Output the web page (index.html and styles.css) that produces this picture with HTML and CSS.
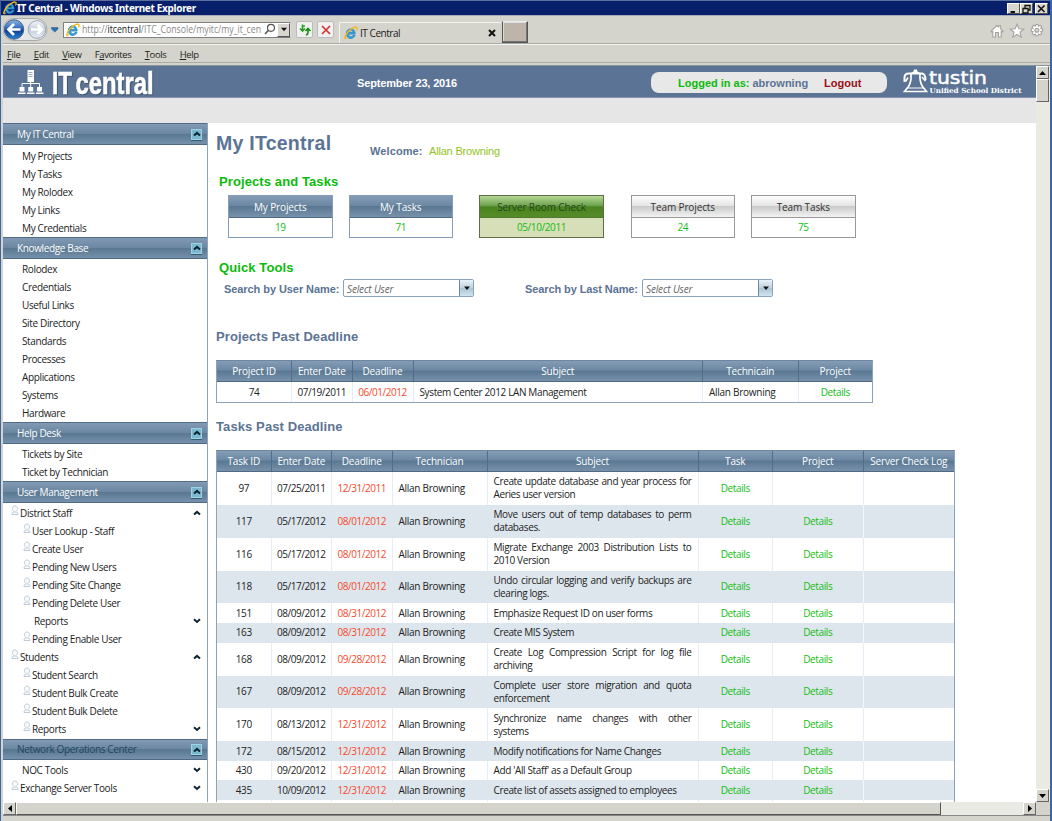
FILE: index.html
```html
<!DOCTYPE html>
<html lang="en">
<head>
<meta charset="utf-8">
<title>IT Central</title>
<link rel="stylesheet" href="styles.css">
</head>
<body>
<svg class="defs" width="0" height="0">
  <symbol id="ie" viewBox="0 0 16 16"><path d="M12.8 9.2H5.2c.2 3.4 4.2 3.8 5.200 1.500h2.300C10.700 16 2.400 15.300 2.600 8.500 2.700 1.600 13 1.200 12.800 9.200zM5.300 7.200h4.900c-.3-3-4.600-3-4.900 0z" fill="#3ba3df" stroke="#2583c0" stroke-width=".9"/><path d="M3 13.300C-.5 17 .5 11.500 4.500 6.800 8.500 2.200 14.500-.5 15 2.300c.2.900-.3 2-.8 2.800" fill="none" stroke="#f0b81c" stroke-width="1.500"/></symbol>
  <symbol id="user" viewBox="0 0 8 11"><path d="M2.500 6.200C.6 4 1.500 1 4 1s3.500 3 1.500 5.200M1 9.500c0-2 1-2.600 3-2.600s3 .6 3 2.600z" fill="#f7fafc" stroke="#bdcbd8" stroke-width="1"/></symbol>
  <symbol id="up" viewBox="0 0 8 6"><path d="M1 4.600 4 1.900 7 4.600" fill="none" stroke="#0d2532" stroke-width="2"/></symbol>
  <symbol id="down" viewBox="0 0 8 6"><path d="M1 1.200 4 3.900 7 1.200" fill="none" stroke="#0d2532" stroke-width="2"/></symbol>
</svg>
<div class="window">
  <div class="titlebar">
    <svg width="14" height="14"><use href="#ie"/></svg>
    <span class="title">IT Central - Windows Internet Explorer</span>
    <span class="winbtn first"><svg width="11" height="10"><path d="M2.500 8H7" stroke="#111" stroke-width="2"/></svg></span>
    <span class="winbtn"><svg width="11" height="10"><path d="M4 4V1.500h5V6H7M2 4.500h5V9H2z" fill="none" stroke="#111" stroke-width="1.300"/></svg></span>
    <span class="winbtn last"><svg width="11" height="10"><path d="M2 1.500 8.500 8M8.500 1.500 2 8" stroke="#111" stroke-width="1.600"/></svg></span>
  </div>
  <div class="toolbar">
    <svg class="nav" width="56" height="26" viewBox="0 0 56 26">
      <defs><linearGradient id="bk" x2="0" y2="1"><stop offset="0" stop-color="#8fb5e4"/><stop offset=".45" stop-color="#2e68b8"/><stop offset=".55" stop-color="#103f94"/><stop offset="1" stop-color="#2b83d2"/></linearGradient><linearGradient id="fw" x2="0" y2="1"><stop offset="0" stop-color="#f5f7fa"/><stop offset=".5" stop-color="#c3cddc"/><stop offset="1" stop-color="#e8eef5"/></linearGradient></defs>
      <rect x="0" y="1.500" width="44" height="22" rx="11" fill="#e6e7e7" stroke="#a9abab"/>
      <circle cx="11" cy="12.500" r="9.700" fill="url(#bk)" stroke="#3e5e8c"/><circle cx="34" cy="12.500" r="8.800" fill="url(#fw)" stroke="#9ba6b4"/>
      <path d="M17.500 12.500H6M11 7 5.500 12.500 11 18" fill="none" stroke="#fff" stroke-width="2.700"/>
      <path d="M28 12.500H39M34.500 8 39 12.500 34.500 17" fill="none" stroke="#fff" stroke-width="2.600"/>
      <path d="M48.500 10.500h6.500v1.500l-3.200 3-3.300-3z" fill="#2976b2" stroke="#1c4f7e" stroke-width=".5"/>
    </svg>
    <div class="address">
      <svg width="14" height="14"><use href="#ie"/></svg>
      <svg class="url" width="182" height="15"><text x="0" y="11" textLength="179" lengthAdjust="spacingAndGlyphs">http://<tspan class="host">itcentral</tspan>/ITC_Console/myitc/my_it_cen</text></svg>
      <svg width="12" height="13"><circle cx="7" cy="4.800" r="3.500" fill="none" stroke="#555" stroke-width="1.200"/><path d="M4.500 7.300 1 11" stroke="#555" stroke-width="1.600"/></svg>
      <span class="drop"><svg width="8" height="5"><path d="M1 .8h6l-3 3.400z" fill="#111"/></svg></span>
    </div>
    <span class="tbtn"><svg width="14" height="14"><path d="M4.500 1.500V8M2 5.500l2.500 2.500L7 5.500M7 3H4.500" fill="none" stroke="#269a26" stroke-width="1.600"/><path d="M10 5v4.500q0 2-2 2.500M7.500 8 10 5.500 12.500 8" fill="none" stroke="#188a18" stroke-width="1.600"/></svg></span>
    <span class="tbtn stop"><svg width="12" height="12"><path d="M2 2 10 10M10 2 2 10" stroke="#cf3434" stroke-width="1.700"/></svg></span>
    <div class="tab"><svg width="14" height="14"><use href="#ie"/></svg><span>IT Central</span><svg class="x" width="10" height="10"><path d="M2 2 8 8M8 2 2 8" stroke="#111" stroke-width="2"/></svg></div>
    <span class="newtab"></span>
    <svg class="tools" width="58" height="16" viewBox="0 0 58 16"><g fill="#fff" stroke="#a3a39f" stroke-width="1.100"><path d="M1 8.200 7 2.500l1.700 1.600V2.800h2v3.200L13 8.200l-1 1-.8-.7V14H8.500V9.500h-3V14H2.800V8.500L2 9.200z"/><path d="m27 1.300 1.900 4.500 4.800.4L30 9.300l1.200 4.800L27 11.500l-4.200 2.600L24 9.300l-3.700-3.100 4.800-.4z"/><path d="m46 1.500 2 0 .5 1.700 1.700-.9 1.500 1.500-.9 1.700 1.700.5v2.200l-1.700.5.9 1.700-1.500 1.500-1.700-.9-.5 1.700h-2.200l-.5-1.700-1.700.9-1.500-1.500.9-1.700-1.700-.5V6l1.700-.5-.9-1.700 1.500-1.500 1.700.9z"/><circle cx="46.900" cy="7.200" r="2" fill="#d5d4cc"/></g></svg>
  </div>
  <div class="menu"><span><u>F</u>ile</span><span><u>E</u>dit</span><span><u>V</u>iew</span><span>F<u>a</u>vorites</span><span><u>T</u>ools</span><span><u>H</u>elp</span></div>

  <div class="viewport">
    <div class="page">
      <header class="banner">
        <svg class="brand" width="155" height="32" viewBox="0 0 155 32">
          <g fill="#fff"><path d="M24.500 4h6.500v12h-6.500z"/><path d="M16.500 21h5v4.500h-5zM25.200 21h5v4.500h-5zM34 21h5v4.500h-5zM15 26.500h7.500V28H15zM24 26.500h7.500V28H24zM33 26.500h7.500V28H33z"/></g>
          <path d="M27.700 15.500V21M19 21v-3.500h17.500V21" fill="none" stroke="#fff"/>
          <path d="M25.500 6.500h4M25.500 8.500h4M25.500 10.500h4" stroke="#8191aa" stroke-width=".8"/>
          <g class="logo-text"><text x="49" y="27.500" textLength="20" lengthAdjust="spacingAndGlyphs">IT</text><text x="72.500" y="27.500" textLength="78" lengthAdjust="spacingAndGlyphs">central</text></g>
        </svg>
        <div class="date">September 23, 2016</div>
        <div class="login"><span class="g">Logged in as:</span> <span class="name">abrowning</span><b>Logout</b></div>
        <svg class="district" width="122" height="32" viewBox="0 0 122 32">
          <path d="M2.500 16V11Q3 7.500 6.500 7.500H20Q23.500 8 23.500 14" fill="none" stroke="#fff" stroke-width="2"/>
          <path d="M6 11.500 3.500 15.500M20 11 23.500 15" stroke="#fff" stroke-width="1.600"/>
          <path d="M9 8Q9.500 16 6.500 20.500L2.500 25.500H24.500L20.500 20.500Q17.500 16 18 8" fill="none" stroke="#fff" stroke-width="1.700"/>
          <path d="M8 7.500 11.500 5.500 12 3.500h3l.5 2 3.500 2z" fill="#fff"/><path d="M5.500 22H21.500" stroke="#fff" stroke-width="1"/>
          <text class="tustin" x="27" y="18" textLength="58" lengthAdjust="spacingAndGlyphs">tustin</text>
          <text class="usd" x="27.500" y="27" textLength="92" lengthAdjust="spacingAndGlyphs">Unified School District</text>
        </svg>
      </header>
      <div class="strip"></div>
      <div class="body">
        <nav class="side">
          <h3>My IT Central<i><svg width="8" height="6"><use href="#up"/></svg></i></h3>
          <ul class="top"><li>My Projects</li><li>My Tasks</li><li>My Rolodex</li><li>My Links</li><li>My Credentials</li></ul>
          <h3>Knowledge Base<i><svg width="8" height="6"><use href="#up"/></svg></i></h3>
          <ul><li>Rolodex</li><li>Credentials</li><li>Useful Links</li><li>Site Directory</li><li>Standards</li><li>Processes</li><li>Applications</li><li>Systems</li><li>Hardware</li></ul>
          <h3>Help Desk<i><svg width="8" height="6"><use href="#up"/></svg></i></h3>
          <ul><li>Tickets by Site</li><li>Ticket by Technician</li></ul>
          <h3>User Management<i><svg width="8" height="6"><use href="#up"/></svg></i></h3>
          <ul>
            <li class="root"><svg class="u" width="8" height="11"><use href="#user"/></svg>District Staff<svg class="a" width="8" height="6"><use href="#up"/></svg></li>
            <li class="sub"><svg class="u" width="8" height="11"><use href="#user"/></svg>User Lookup - Staff</li>
            <li class="sub"><svg class="u" width="8" height="11"><use href="#user"/></svg>Create User</li>
            <li class="sub"><svg class="u" width="8" height="11"><use href="#user"/></svg>Pending New Users</li>
            <li class="sub"><svg class="u" width="8" height="11"><use href="#user"/></svg>Pending Site Change</li>
            <li class="sub"><svg class="u" width="8" height="11"><use href="#user"/></svg>Pending Delete User</li>
            <li class="plain">Reports<svg class="a" width="8" height="6"><use href="#down"/></svg></li>
            <li class="sub"><svg class="u" width="8" height="11"><use href="#user"/></svg>Pending Enable User</li>
            <li class="root"><svg class="u" width="8" height="11"><use href="#user"/></svg>Students<svg class="a" width="8" height="6"><use href="#up"/></svg></li>
            <li class="sub"><svg class="u" width="8" height="11"><use href="#user"/></svg>Student Search</li>
            <li class="sub"><svg class="u" width="8" height="11"><use href="#user"/></svg>Student Bulk Create</li>
            <li class="sub"><svg class="u" width="8" height="11"><use href="#user"/></svg>Student Bulk Delete</li>
            <li class="sub"><svg class="u" width="8" height="11"><use href="#user"/></svg>Reports<svg class="a" width="8" height="6"><use href="#down"/></svg></li>
          </ul>
          <h3 class="noc">Network Operations Center<i><svg width="8" height="6"><use href="#up"/></svg></i></h3>
          <ul><li>NOC Tools<svg class="a" width="8" height="6"><use href="#down"/></svg></li><li class="root"><svg class="u" width="8" height="11"><use href="#user"/></svg>Exchange Server Tools<svg class="a" width="8" height="6"><use href="#down"/></svg></li></ul>
        </nav>
        <main>
          <div class="headline"><h1>My ITcentral</h1><span class="welcome">Welcome:</span><span class="who">Allan Browning</span></div>
          <h2 class="green pt">Projects and Tasks</h2>
          <div class="cards">
            <div class="card"><b>My Projects</b><span>19</span></div>
            <div class="card"><b>My Tasks</b><span>71</span></div>
            <div class="card check"><b>Server Room Check</b><span>05/10/2011</span></div>
            <div class="card team"><b>Team Projects</b><span>24</span></div>
            <div class="card team"><b>Team Tasks</b><span>75</span></div>
          </div>
          <h2 class="green qt">Quick Tools</h2>
          <div class="search">
            <label>Search by User Name:</label><div class="combo"><span>Select User</span><i><svg width="8" height="5"><path d="M1 .5h6l-3 3.500z" fill="#111"/></svg></i></div>
            <label class="second">Search by Last Name:</label><div class="combo"><span>Select User</span><i><svg width="8" height="5"><path d="M1 .5h6l-3 3.500z" fill="#111"/></svg></i></div>
          </div>
          <h2 class="ppd">Projects Past Deadline</h2>
          <div class="grid projects">
            <div class="row head"><span>Project ID</span><span>Enter Date</span><span>Deadline</span><span>Subject</span><span>Technicain</span><span>Project</span></div>
            <div class="row one"><span>74</span><span class="t">07/19/2011</span><span class="t red">06/01/2012</span><span class="l">System Center 2012 LAN Management</span><span class="l n">Allan Browning</span><span class="d">Details</span></div>
          </div>
          <h2 class="tpd">Tasks Past Deadline</h2>
          <div class="grid tasks">
            <div class="row head"><span>Task ID</span><span>Enter Date</span><span>Deadline</span><span>Technician</span><span>Subject</span><span>Task</span><span>Project</span><span>Server Check Log</span></div>
            <div class="row two"><span>97</span><span class="t">07/25/2011</span><span class="t red">12/31/2011</span><span class="l n">Allan Browning</span><span class="s"><em>Create update database and year process for</em><em>Aeries user version</em></span><span class="d">Details</span><span></span><span></span></div>
            <div class="row two alt"><span>117</span><span class="t">05/17/2012</span><span class="t red">08/01/2012</span><span class="l n">Allan Browning</span><span class="s"><em>Move users out of temp databases to perm</em><em>databases.</em></span><span class="d">Details</span><span class="d">Details</span><span></span></div>
            <div class="row two"><span>116</span><span class="t">05/17/2012</span><span class="t red">08/01/2012</span><span class="l n">Allan Browning</span><span class="s"><em>Migrate Exchange 2003 Distribution Lists to</em><em>2010 Version</em></span><span class="d">Details</span><span class="d">Details</span><span></span></div>
            <div class="row two alt"><span>118</span><span class="t">05/17/2012</span><span class="t red">08/01/2012</span><span class="l n">Allan Browning</span><span class="s"><em>Undo circular logging and verify backups are</em><em>clearing logs.</em></span><span class="d">Details</span><span class="d">Details</span><span></span></div>
            <div class="row"><span>151</span><span class="t">08/09/2012</span><span class="t red">08/31/2012</span><span class="l n">Allan Browning</span><span class="l">Emphasize Request ID on user forms</span><span class="d">Details</span><span class="d">Details</span><span></span></div>
            <div class="row alt"><span>163</span><span class="t">08/09/2012</span><span class="t red">08/31/2012</span><span class="l n">Allan Browning</span><span class="l">Create MIS System</span><span class="d">Details</span><span class="d">Details</span><span></span></div>
            <div class="row two"><span>168</span><span class="t">08/09/2012</span><span class="t red">09/28/2012</span><span class="l n">Allan Browning</span><span class="s"><em>Create Log Compression Script for log file</em><em>archiving</em></span><span class="d">Details</span><span class="d">Details</span><span></span></div>
            <div class="row two alt"><span>167</span><span class="t">08/09/2012</span><span class="t red">09/28/2012</span><span class="l n">Allan Browning</span><span class="s"><em>Complete user store migration and quota</em><em>enforcement</em></span><span class="d">Details</span><span class="d">Details</span><span></span></div>
            <div class="row two"><span>170</span><span class="t">08/13/2012</span><span class="t red">12/31/2012</span><span class="l n">Allan Browning</span><span class="s"><em>Synchronize name changes with other</em><em>systems</em></span><span class="d">Details</span><span class="d">Details</span><span></span></div>
            <div class="row alt"><span>172</span><span class="t">08/15/2012</span><span class="t red">12/31/2012</span><span class="l n">Allan Browning</span><span class="l">Modify notifications for Name Changes</span><span class="d">Details</span><span class="d">Details</span><span></span></div>
            <div class="row"><span>430</span><span class="t">09/20/2012</span><span class="t red">12/31/2012</span><span class="l n">Allan Browning</span><span class="l">Add 'All Staff' as a Default Group</span><span class="d">Details</span><span class="d">Details</span><span></span></div>
            <div class="row alt"><span>435</span><span class="t">10/09/2012</span><span class="t red">12/31/2012</span><span class="l n">Allan Browning</span><span class="l">Create list of assets assigned to employees</span><span class="d">Details</span><span class="d">Details</span><span></span></div>
            <div class="row"><span></span><span></span><span></span><span></span><span></span><span></span><span></span><span></span></div>
          </div>
        </main>
      </div>
    </div>
    <div class="vscroll"><span class="sbtn"><svg width="7" height="4"><path d="M0 4 3.500 0 7 4z"/></svg></span><span class="vthumb"></span><span class="sbtn end"><svg width="7" height="4"><path d="M0 0 3.500 4 7 0z"/></svg></span></div>
  </div>
  <div class="hscroll"><span class="sbtn"><svg width="4" height="7"><path d="M4 0 0 3.500 4 7z"/></svg></span><span class="hthumb"></span><span class="sbtn end"><svg width="4" height="7"><path d="M0 0 4 3.500 0 7z"/></svg></span><span class="corner"></span></div>
</div>
</body>
</html>
```
FILE: styles.css
```css
* { box-sizing: border-box; }
body { margin: 0; height: 821px; overflow: hidden; font: 10px/13px "Open Sans", "Noto Sans", sans-serif; color: #222; background: #3b68a5; }
h1, h2, h3, ul { margin: 0; padding: 0; }
svg { flex: none; display: block; }
.defs { position: absolute; }
.window { width: 1052px; height: 821px; display: flex; flex-direction: column; padding-left: 2px; border-right: 2px solid #3b68a5; background: #d5d4cc; border-left: 1px solid #3b68a5; }

.titlebar { height: 16px; flex: none; display: flex; align-items: center; background: #081f6b; border-top: 1px solid #5b6f9e; border-bottom: 1px solid #a6abb5; padding: 0 2px 0 0; margin-left: -2px; }
.titlebar > svg { margin: 0 0 0 2px; }
.title { color: #fff; font: bold 10px/13px "Noto Sans", sans-serif; letter-spacing: -0.32px; flex: 1; white-space: nowrap; }
.winbtn { width: 13px; height: 11px; background: #d8d6ce; border: 1px solid; border-color: #fff #555 #555 #fff; }
.winbtn.last { margin-left: 2px; }

.toolbar { height: 28px; flex: none; display: flex; align-items: center; border-bottom: 1px solid #a9aca6; }
.nav { margin: 0 4px 0 0; }
.address { width: 228px; height: 16px; display: flex; align-items: center; background: #fff; border: 1px solid #808080; border-right-color: #ddd; padding-left: 2px; }
.address .url { margin-left: 2px; }
.url text { font: 10px "Open Sans", sans-serif; fill: #888; }
.url .host { fill: #222; }
.drop { margin-left: auto; width: 13px; height: 14px; background: #d8d6ce; border: 1px solid; border-color: #fff #555 #555 #fff; display: grid; place-items: center; }
.tbtn { width: 17px; height: 17px; margin-left: 5px; background: #f1f1ef; border: 1px solid #b9bbc0; border-radius: 2px; display: grid; place-items: center; }
.tbtn.stop { margin-left: 4px; }
.tab { align-self: flex-end; width: 162px; height: 21px; margin-left: 5px; display: flex; align-items: center; border: solid #f4f4f0; border-width: 1px 0 0 1px; padding: 0 4px; }
.tab span { margin-left: 2px; letter-spacing: -0.45px; }
.tab .x { margin-left: auto; }
.newtab { align-self: flex-end; width: 26px; height: 22px; margin-left: 1px; background: #beb4aa; border: 1px solid #555; border-top-color: #eee; box-shadow: inset -1px -1px #777, inset 1px 1px #ddd; }
.tools { margin: 2px 2px 0 auto; }
.menu { height: 19px; flex: none; display: flex; gap: 13.300px; padding: 3px 0 0 4px; font-size: 9.500px; line-height: 13px; letter-spacing: -0.4px; border-bottom: 1px solid #aaa9a4; border-top: 1px solid #f4f4f0; }

.viewport { flex: none; height: 737px; display: flex; margin-top: 2px; border-top: 1px solid #8b929c; }
.page { width: 1033px; flex: none; background: #fff; overflow: hidden; }
.banner { height: 32px; background: #5b7394; border-bottom: 1px solid #8296af; display: flex; align-items: flex-start; font: bold 11px/14px "Liberation Sans", sans-serif; }
.logo-text { font: bold 31px "Liberation Sans", sans-serif; fill: #fff; stroke: #fff; stroke-width: .6px; filter: drop-shadow(1px 1px 0 #43566f); }
.date { color: #fff; width: 102px; margin: 10px 0 0 199px; white-space: nowrap; letter-spacing: -.15px; }
.login { margin: 6px 0 0 192px; width: 236px; height: 21px; border-radius: 8px; background: #e8e8e8; padding: 4px 0 0 27px; display: flex; gap: 3px; white-space: nowrap; }
.login .g { color: #0bbb0b; }
.login .name { color: #5b7394; }
.login b { color: #990d15; margin-left: 13px; }
.district { margin-left: 15px; }
.tustin { font: 18px "DejaVu Sans", sans-serif; fill: #fff; stroke: #fff; stroke-width: .5px; }
.usd { font: bold 7px "DejaVu Serif", serif; fill: #fff; }
.strip { height: 25px; background: #e6e6e6; }
.body { display: flex; height: 680px; }

.side { width: 205px; flex: none; border-right: 1px solid #8ea3bb; overflow: hidden; letter-spacing: -.36px; }
.side h3 { height: 22px; display: flex; align-items: center; justify-content: space-between; padding: 0 5px 0 14px; color: #fff; font-weight: 400; font-size: 10px; border-top: 1px solid #536d89; border-bottom: 1px solid #506a86; background: linear-gradient(#8299b3, #6b87a2 48%, #59778f 50%, #7590ac); }
.side h3 i { width: 11px; height: 11px; display: grid; place-items: center; background: #7cb9ce; border: 1px solid #9cd3e2; box-shadow: 0 1px #355b72; }
.side h3.noc { color: #1d4661; margin-top: 1px; height: 21px; }
.side ul { list-style: none; padding-top: 1px; }
.side ul.top { padding-top: 2px; }
.side li { height: 18px; display: flex; align-items: center; padding: 0 6px 0 19px; }
.side li .a { margin-left: auto; }
.side li .u { margin: -5px 1px 0 0; }
.side .root { padding-left: 8px; }
.side .sub { padding-left: 20px; }
.side .plain { padding-left: 31px; }

main { width: 828px; padding-left: 8px; font-family: "Open Sans", "Noto Sans", sans-serif; }
h1, h2, label, .welcome, .who { font-family: "Liberation Sans", sans-serif; white-space: nowrap; color: #5b7394; }
.headline { height: 50px; display: flex; }
h1 { width: 154px; font-size: 19.500px; line-height: 22px; padding-top: 9px; letter-spacing: .25px; }
.welcome { font-weight: bold; font-size: 11px; padding-top: 22px; width: 59px; letter-spacing: .1px; }
.who { color: #94c225; font-size: 11px; padding-top: 22px; letter-spacing: -.18px; }
h2 { font-size: 13px; line-height: 16px; letter-spacing: .1px; }
.green { color: #0bbb0b; margin-left: 3px; }
.pt { height: 22px; padding-top: 1px; }
.cards { display: flex; margin-left: 12px; }
.card { width: 104.500px; height: 43px; margin-right: 16px; border: 1px solid #859db8; text-align: center; display: flex; flex-direction: column; color: #13bd13; }
.card b { height: 22px; line-height: 22px; font-weight: 400; letter-spacing: -.12px; color: #fff; background: linear-gradient(#859cb5, #6c88a4 45%, #5a7892 50%, #7891ab); border-bottom: 1px solid #506a86; }
.card span { line-height: 19px; letter-spacing: -.4px; }
.card.check { width: 125px; margin: 0 26.500px 0 10px; border-color: #5e6e4a; background: #d6dfb8; }
.card.check b { color: #26461b; background: linear-gradient(#b6d896, #6fa350 45%, #49841f 52%, #568c28); border-color: #53782f; }
.card.team { border-color: #999; }
.card.team b { color: #333; border-color: #999; background: linear-gradient(#fdfdfd, #e3e3e3 48%, #cbcbcb 50%, #f3f3f3); }
.qt { margin-top: 22px; height: 19px; }
.search { display: flex; height: 19px; padding-left: 8px; }
label { font-weight: bold; font-size: 11px; line-height: 20px; width: 119px; letter-spacing: -.07px; }
label.second { margin-left: 51px; width: 117px; letter-spacing: -.1px; }
.combo { width: 131px; height: 18px; border: 1px solid #8ba2bb; border-radius: 2px; display: flex; }
.combo span { flex: 1; padding-left: 3px; font-style: italic; line-height: 18px; color: #666; letter-spacing: -.15px; }
.combo i { width: 14px; border-left: 1px solid #70889f; background: linear-gradient(#eaf2f8, #bdd2e0 50%, #a9c4d5 52%, #d3e4ed); display: grid; place-items: center; }
.ppd { margin-top: 31px; height: 31px; }
.tpd { margin-top: 16px; height: 31px; }

.grid { border: 1px solid #8ba2bb; border-top-color: #6e86a1; letter-spacing: -.37px; }
.projects { width: 657px; }
.tasks { width: 739px; }
.row { display: grid; height: 19.650px; align-items: stretch; }
.projects .row { grid-template-columns: 75px 60.500px 61px 289.500px 95.500px 1fr; }
.tasks .row { grid-template-columns: 54.500px 60.500px 60.500px 95px 211px 74.500px 90.500px 1fr; }
.row.two { height: 32.850px; }
.projects .row.one { height: 20px; }
.row.head { height: 21px; letter-spacing: -.18px; color: #fff; background: linear-gradient(#859cb5, #6c88a4 45%, #5a7892 50%, #7891ab); border-bottom: 1px solid #506a86; }
.row > span { display: flex; align-items: center; justify-content: center; border-right: 1px solid #e6edf4; white-space: nowrap; }
.row > span:last-child { border-right: 0; }
.row.head > span { border-color: #526d8a; }
.row.alt { background: #dee6ed; }
.row.alt > span { border-color: #dee6ed; }
.row.alt > span:nth-child(7) { border-color: #f4f7fa; }
.row .l { justify-content: flex-start; padding-left: 6px; }
.row .n { letter-spacing: -.27px; }
.row .t { letter-spacing: -.48px; }
.row .s { flex-direction: column; align-items: stretch; padding: 0 6px; }
.row em { font-style: normal; line-height: 13px; }
.row em:first-child { white-space: normal; text-align: justify; text-align-last: justify; }
.row .red { color: #f8492b; }
.row .d { color: #13bd13; }

.vscroll { width: 14px; background: #eaeae5; display: flex; flex-direction: column; }
.sbtn { flex: none; width: 13px; height: 13px; background: #d5d4cc; border: 1px solid; border-color: #fff #666 #666 #fff; display: grid; place-items: center; }
.vthumb { width: 13px; height: 23px; background: #d5d4cc; border: 1px solid; border-color: #fff #666 #666 #fff; }
.vscroll .end { margin-top: auto; }
.hscroll { height: 14px; flex: none; display: flex; background: #eaeae5; border-bottom: 1px solid #888; }
.hthumb { width: 925px; background: #d5d4cc; border: 1px solid; border-color: #fff #555 #555 #fff; }
.hscroll .end { margin-left: auto; }
.corner { width: 14px; background: #d5d4cc; }
```
